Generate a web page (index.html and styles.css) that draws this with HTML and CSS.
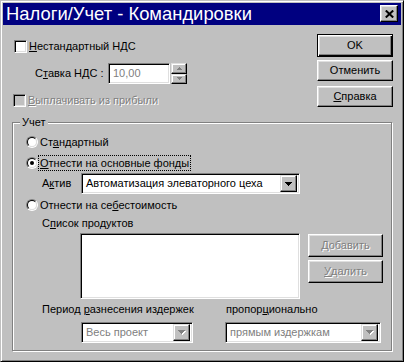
FILE: index.html
```html
<!DOCTYPE html>
<html lang="ru">
<head>
  <meta charset="UTF-8">
  <title>Налоги/Учет - Командировки</title>
  <link rel="stylesheet" href="styles.css">
</head>
<body>
  <div class="window">
    <div class="titlebar">
      <span class="title">Налоги/Учет - Командировки</span>
      <span class="close">
        <svg width="9" height="8" viewBox="0 0 9 8"><path d="M0.8 0.5 L8.2 7.5 M8.2 0.5 L0.8 7.5" stroke="#000" stroke-width="2"/></svg>
      </span>
    </div>

    <div class="body">
      <div class="top">
        <div class="top-left">
          <div class="check-row">
            <span class="checkbox"></span>
            <span><u>Н</u>естандартный НДС</span>
          </div>
          <div class="rate-row">
            <span class="rate-label">С<u>т</u>авка НДС :</span>
            <span class="field rate-field">10,00</span>
            <span class="spinner">
              <span class="spin-btn">
                <svg width="5" height="3" viewBox="0 0 5 3" shape-rendering="crispEdges"><path d="M2 0h1v1h1v1h1v1h-5v-1h1v-1h1z" fill="#808080"/></svg>
              </span>
              <span class="spin-btn">
                <svg width="5" height="3" viewBox="0 0 5 3" shape-rendering="crispEdges"><path d="M0 0h5v1h-1v1h-1v1h-1v-1h-1v-1h-1z" fill="#808080"/></svg>
              </span>
            </span>
          </div>
          <div class="check-row disabled">
            <span class="checkbox off"></span>
            <span class="muted"><u>В</u>ыплачивать из прибыли</span>
          </div>
        </div>

        <!-- Dialog buttons -->
        <div class="buttons">
          <div class="btn default">OK</div>
          <div class="btn">Отменить</div>
          <div class="btn"><u>С</u>правка</div>
        </div>
      </div>

      <div class="group">
        <div class="group-title">Учет</div>

        <div class="radio-row first">
          <span class="radio"><span class="radio-in"></span></span>
          <span class="radio-label">Ст<u>а</u>ндартный</span>
        </div>
        <div class="radio-row">
          <span class="radio"><span class="radio-in"><span class="dot"></span></span></span>
          <span class="radio-label focused"><u>О</u>тнести на основные фонды</span>
        </div>

        <div class="asset-row">
          <span class="asset-label">А<u>к</u>тив</span>
          <span class="field combo asset-combo">
            <span class="combo-text">Автоматизация элеваторного цеха</span>
            <span class="drop-btn">
              <svg width="7" height="4" viewBox="0 0 7 4" shape-rendering="crispEdges"><path d="M0 0h7v1h-1v1h-1v1h-1v1h-1v-1h-1v-1h-1v-1h-1z" fill="#000"/></svg>
            </span>
          </span>
        </div>

        <div class="radio-row third">
          <span class="radio"><span class="radio-in"></span></span>
          <span class="radio-label">Отнести на се<u>б</u>естоимость</span>
        </div>

        <div class="list-label">С<u>п</u>исок продуктов</div>
        <div class="list-row">
          <div class="field listbox"></div>
          <div class="list-buttons">
            <div class="btn wide muted"><u>Д</u>обавить</div>
            <div class="btn wide muted"><u>У</u>далить</div>
          </div>
        </div>

        <div class="period-row">
          <span class="period-label">Период <u>р</u>азнесения издержек</span>
          <span>пропор<u>ц</u>ионально</span>
        </div>
        <div class="combo-row">
          <span class="field combo period-combo">
            <span class="combo-text gray">Весь проект</span>
            <span class="drop-btn">
              <svg width="8" height="5" viewBox="0 0 8 5" shape-rendering="crispEdges"><path d="M1 1h7v1h-1v1h-1v1h-1v1h-1v-1h-1v-1h-1v-1h-1z" fill="#fff"/><path d="M0 0h7v1h-1v1h-1v1h-1v1h-1v-1h-1v-1h-1v-1h-1z" fill="#808080"/></svg>
            </span>
          </span>
          <span class="field combo ratio-combo">
            <span class="combo-text gray">прямым издержкам</span>
            <span class="drop-btn">
              <svg width="8" height="5" viewBox="0 0 8 5" shape-rendering="crispEdges"><path d="M1 1h7v1h-1v1h-1v1h-1v1h-1v-1h-1v-1h-1v-1h-1z" fill="#fff"/><path d="M0 0h7v1h-1v1h-1v1h-1v1h-1v-1h-1v-1h-1v-1h-1z" fill="#808080"/></svg>
            </span>
          </span>
        </div>
      </div>
    </div>
  </div>
</body>
</html>
```

FILE: styles.css
```css
* {
  box-sizing: border-box;
}
body {
  margin: 0;
  background: #c0c0c0;
  font-family: "Liberation Sans", Arial, sans-serif;
  font-size: 11px;
  line-height: 13px;
  color: #000;
}
u {
  text-decoration-thickness: 1px;
  text-underline-offset: 1px;
}
/* Window frame */
.window {
  width: 404px;
  height: 362px;
  background: #c0c0c0;
  border: 1px solid;
  border-color: #c0c0c0 #000 #000 #c0c0c0;
  box-shadow: inset 1px 1px #fff, inset -1px -1px #808080;
  padding: 2px;
  display: flex;
  flex-direction: column;
}
.titlebar {
  height: 22px;
  background: #000080;
  color: #fff;
  display: flex;
  justify-content: space-between;
  align-items: flex-start;
  padding: 0 3px 0 3px;
}
.title {
  font-size: 18.4px;
  line-height: 22px;
}
.close {
  width: 18px;
  height: 17px;
  margin-top: 2px;
  background: #c0c0c0;
  border: 1px solid;
  border-color: #fff #000 #000 #fff;
  box-shadow: inset -1px -1px #808080, inset 1px 1px #dfdfdf;
  display: flex;
  align-items: center;
  justify-content: center;
}
/* Common bevels */
.field {
  background: #fff;
  border: 1px solid;
  border-color: #808080 #fff #fff #808080;
  box-shadow: inset 1px 1px #000, inset -1px -1px #dfdfdf;
}
.btn {
  width: 76px;
  height: 21px;
  background: #c0c0c0;
  border: 1px solid;
  border-color: #fff #000 #000 #fff;
  box-shadow: inset -1px -1px #808080, inset 1px 1px #dfdfdf;
  display: flex;
  align-items: center;
  justify-content: center;
}
.btn.default {
  height: 23px;
  border-color: #000;
  box-shadow: inset 1px 1px #fff, inset -1px -1px #000, inset -2px -2px #808080, inset 2px 2px #dfdfdf;
}
.muted {
  color: #808080;
  text-shadow: 1px 1px 0 #fff;
}
.gray {
  color: #808080;
}
.body {
  flex: 1;
  padding: 0 8px 0 9px;
  display: flex;
  flex-direction: column;
}
/* Top part */
.top {
  height: 97px;
  display: flex;
}
.top-left {
  flex: 1;
  padding-top: 15px;
}
.check-row {
  display: flex;
  align-items: center;
  gap: 2px;
  height: 13px;
  margin-left: 2px;
}
.check-row.disabled {
  margin-top: 10px;
  margin-left: 1px;
}
.checkbox {
  width: 13px;
  height: 13px;
  background: #fff;
  border: 1px solid;
  border-color: #808080 #fff #fff #808080;
  box-shadow: inset 1px 1px #000, inset -1px -1px #dfdfdf;
}
.checkbox.off {
  background: #c0c0c0;
}
.rate-row {
  display: flex;
  align-items: center;
  height: 21px;
  margin-top: 10px;
  padding-left: 23px;
}
.rate-label {
  width: 73px;
}
.rate-field {
  width: 62px;
  height: 21px;
  padding: 3px 0 0 4px;
  color: #808080;
}
.spinner {
  width: 16px;
  height: 21px;
  margin-left: 1px;
  display: flex;
  flex-direction: column;
}
.spin-btn {
  flex: 1;
  background: #c0c0c0;
  border: 1px solid;
  border-color: #dfdfdf #000 #000 #dfdfdf;
  box-shadow: inset -1px -1px #808080, inset 1px 1px #fff;
  display: flex;
  align-items: center;
  justify-content: center;
}
.buttons {
  padding-top: 9px;
  display: flex;
  flex-direction: column;
}
.buttons .btn + .btn {
  margin-top: 5px;
}
.buttons .btn.default + .btn {
  margin-top: 3px;
}
/* Group box */
.group {
  width: 380px;
  height: 229px;
  border: 1px solid #808080;
  box-shadow: inset 1px 1px #fff, 1px 1px #fff;
  display: flex;
  flex-direction: column;
}
.group-title {
  align-self: flex-start;
  margin: -7px 0 0 7px;
  padding: 0 2px;
  background: #c0c0c0;
}
.radio-row {
  display: flex;
  align-items: center;
  height: 16px;
  margin: 0 0 0 13px;
}
.radio-row.first {
  margin-top: 5px;
}
.radio-row + .radio-row {
  margin-top: 5px;
}
.radio-row.third {
  margin-top: 3px;
}
.radio {
  width: 12px;
  height: 12px;
  border-radius: 50%;
  border: 1px solid;
  border-color: #808080 #fff #fff #808080;
}
.radio-in {
  display: flex;
  align-items: center;
  justify-content: center;
  width: 10px;
  height: 10px;
  border-radius: 50%;
  background: #fff;
  border: 1px solid;
  border-color: #000 #dfdfdf #dfdfdf #000;
}
.dot {
  width: 4px;
  height: 4px;
  border-radius: 50%;
  background: #000;
}
.radio-label {
  height: 16px;
  line-height: 14px;
  padding: 0 1px;
  border: 1px dotted transparent;
}
.radio-label.focused {
  border-color: #000;
}
.asset-row {
  display: flex;
  align-items: center;
  height: 21px;
  margin-top: 2px;
  padding-left: 29px;
}
.asset-label {
  width: 39px;
}
.combo {
  display: flex;
  align-items: center;
  justify-content: space-between;
  height: 21px;
  padding: 2px;
}
.combo-text {
  padding-left: 2px;
  white-space: nowrap;
}
.drop-btn {
  width: 17px;
  height: 17px;
  background: #c0c0c0;
  border: 1px solid;
  border-color: #dfdfdf #000 #000 #dfdfdf;
  box-shadow: inset -1px -1px #808080, inset 1px 1px #fff;
  display: flex;
  align-items: center;
  justify-content: center;
}
.asset-combo {
  width: 219px;
}
.list-label {
  margin-top: 4px;
  padding-left: 29px;
}
.list-row {
  display: flex;
  margin-top: 3px;
  padding-left: 67px;
}
.listbox {
  width: 220px;
  height: 66px;
}
.list-buttons {
  margin-left: 8px;
  padding-top: 1px;
  display: flex;
  flex-direction: column;
  gap: 3px;
}
.btn.wide {
  width: 75px;
  height: 23px;
}
.period-row {
  display: flex;
  margin-top: 4px;
  padding-left: 29px;
}
.period-label {
  width: 184px;
}
.combo-row {
  display: flex;
  margin-top: 6px;
  padding-left: 68px;
}
.period-combo {
  width: 112px;
}
.ratio-combo {
  width: 156px;
  margin-left: 32px;
}
```
